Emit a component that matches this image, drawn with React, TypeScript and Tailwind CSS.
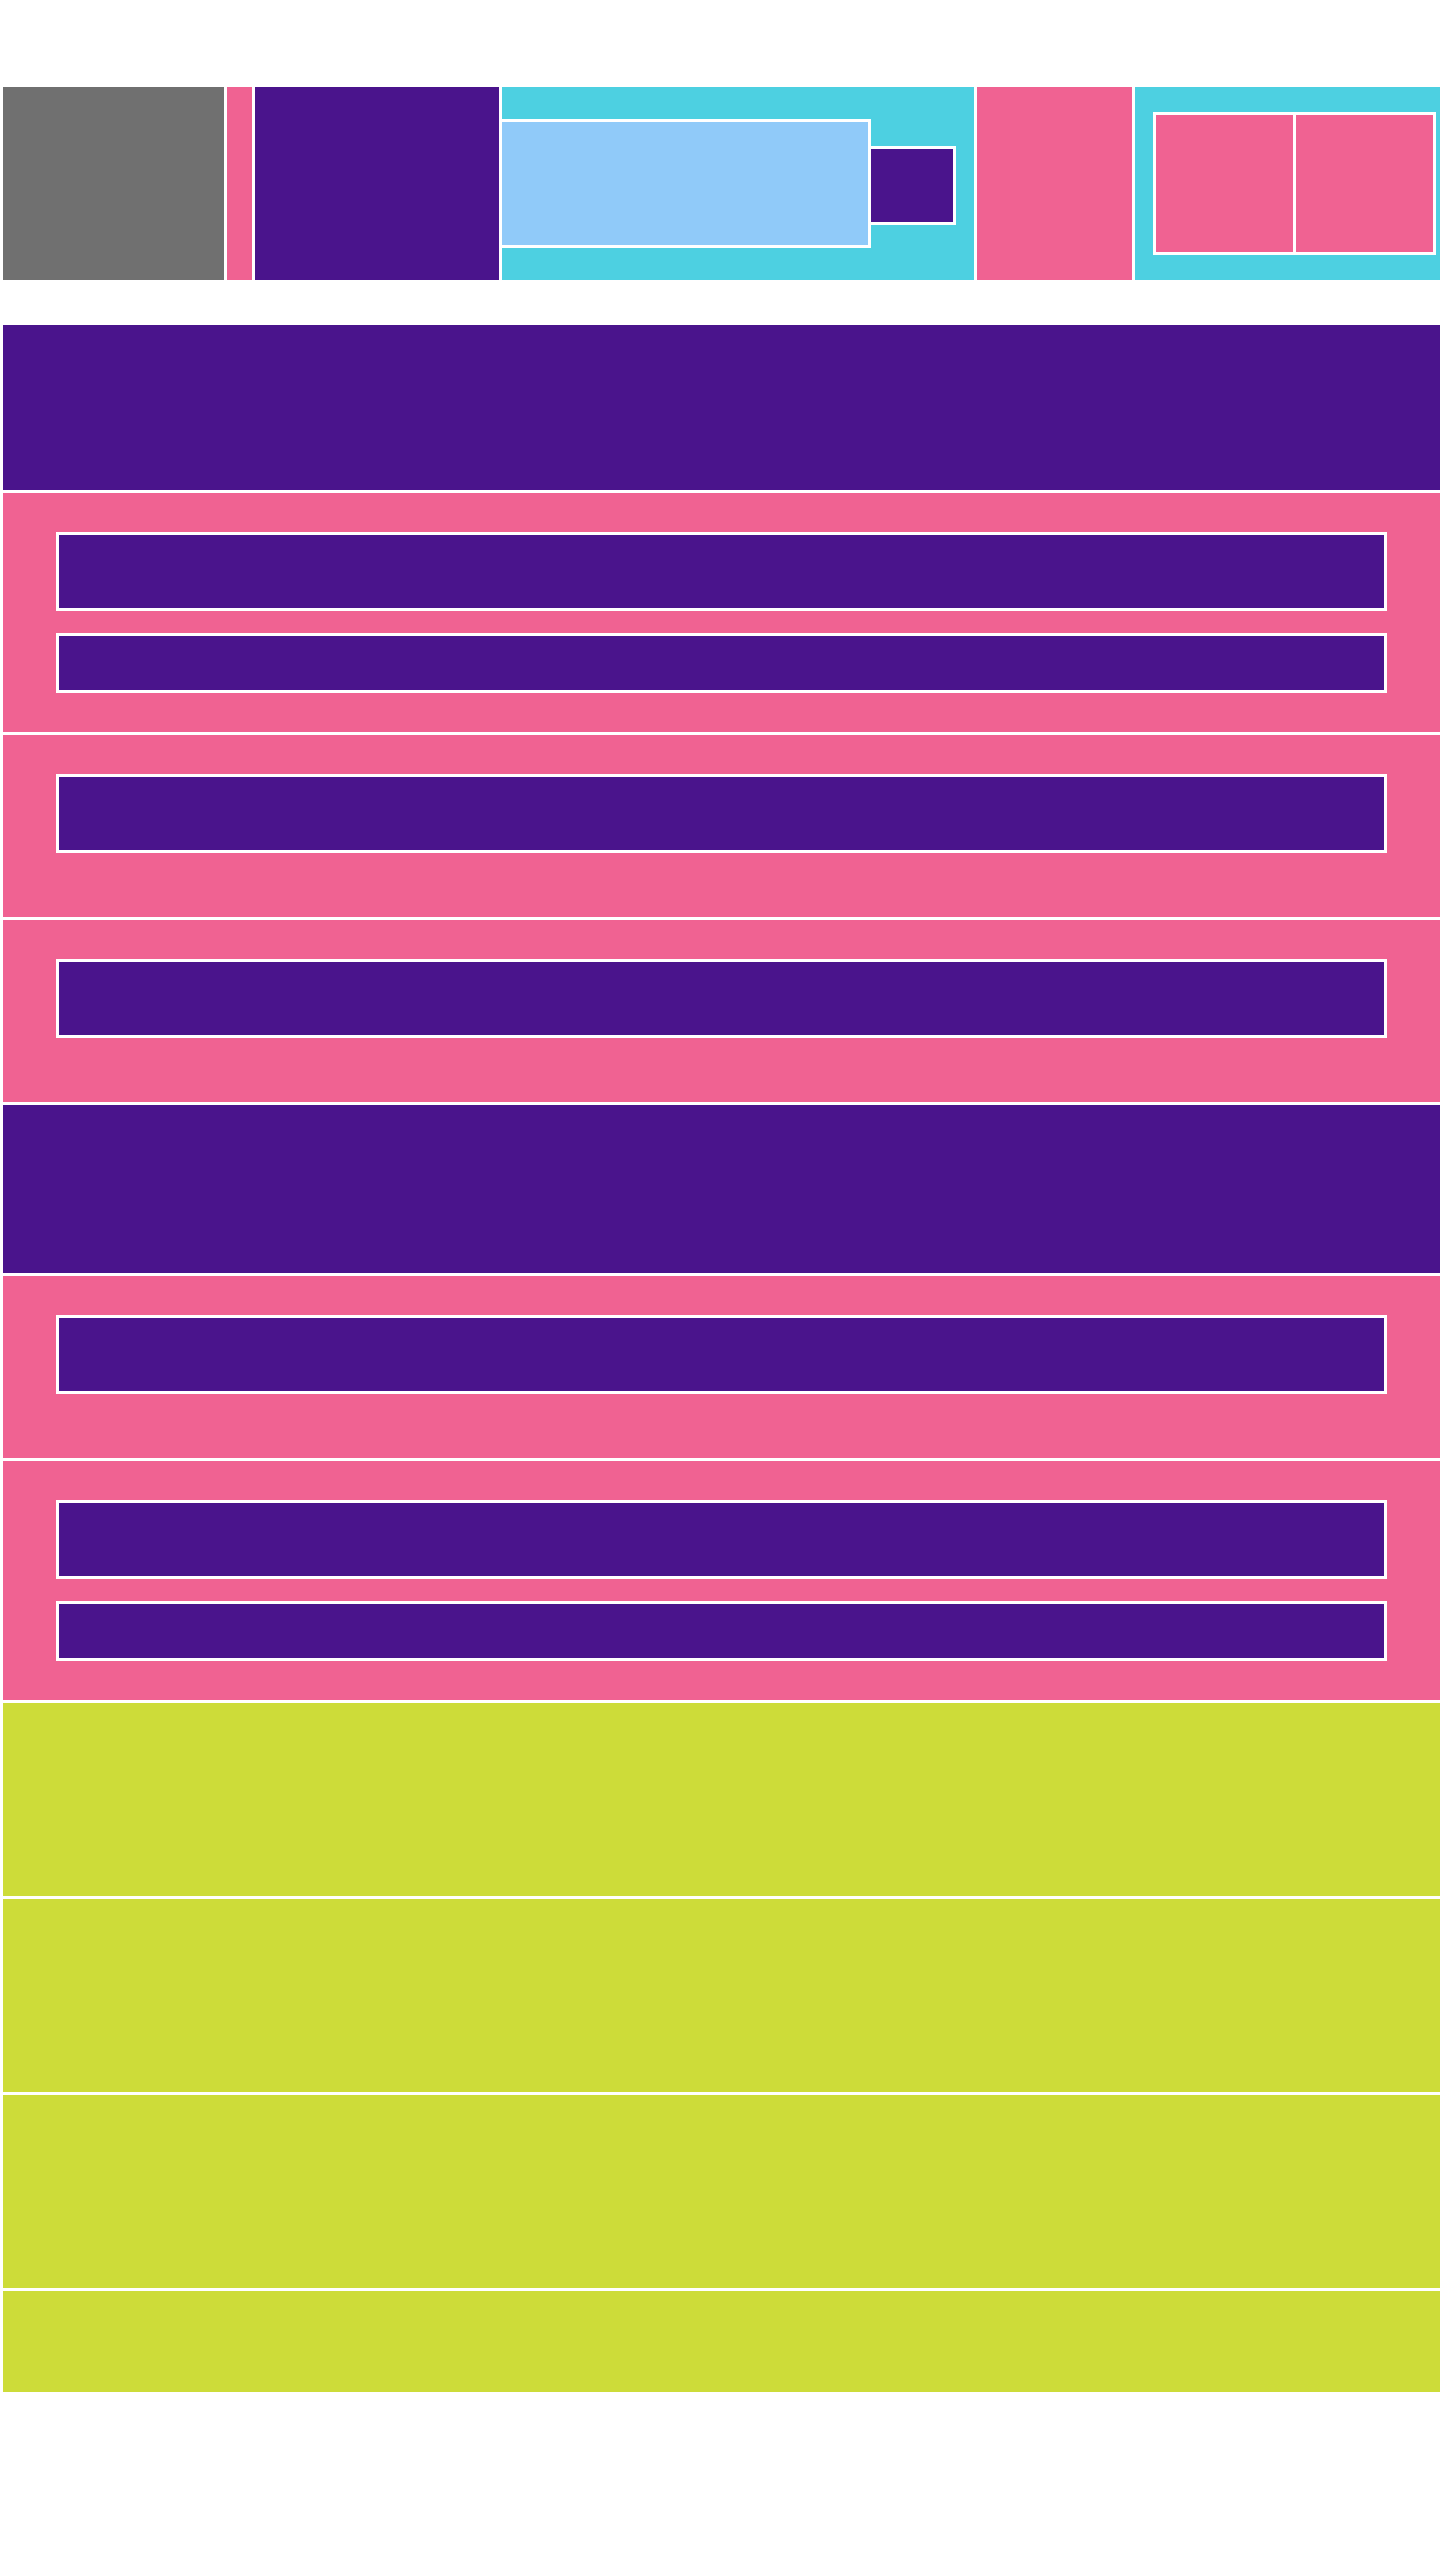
const pink = 'bg-[#f06292]';
const purple = 'bg-[#4a148c]';

function Slot({ h }: { h: string }) {
  return <div className={`${h} w-full border-[3px] border-white bg-[#4a148c]`} />;
}

function PinkBand({ tall, double }: { tall: string; double?: boolean }) {
  return (
    <section className={`${tall} ${pink} flex flex-col gap-[22px] px-[53px] pt-[39px]`}>
      <Slot h="h-[79px]" />
      {double && <Slot h="h-[60px]" />}
    </section>
  );
}

export default function App() {
  return (
    <div className="min-h-screen bg-white pl-[3px] pt-[87px] pb-[168px]">
      {/* top strip */}
      <header className="flex h-[193px] gap-[3px]">
        <div className="w-[221px] shrink-0 bg-[#707070]" />
        <div className={`w-[25px] shrink-0 ${pink}`} />
        <div className={`w-[244px] shrink-0 ${purple}`} />
        <div className="flex w-[472px] shrink-0 items-center bg-[#4dd0e1]">
          <div className="h-[129px] w-[369px] border-y-[3px] border-r-[3px] border-white bg-[#90caf9]" />
          <div className={`mt-[4px] h-[79px] w-[85px] border-y-[3px] border-r-[3px] border-white ${purple}`} />
        </div>
        <div className={`w-[155px] shrink-0 ${pink}`} />
        <div className="flex flex-1 items-center bg-[#4dd0e1] pl-[18px]">
          <div className="flex h-[143px] w-[283px] gap-[3px] border-[3px] border-white bg-white">
            <div className={`flex-1 ${pink}`} />
            <div className={`flex-1 ${pink}`} />
          </div>
        </div>
      </header>

      {/* stacked bands */}
      <main className="mt-[45px] flex flex-col gap-[3px]">
        <section className={`h-[165px] ${purple}`} />
        <PinkBand tall="h-[239px]" double />
        <PinkBand tall="h-[182px]" />
        <PinkBand tall="h-[182px]" />
        <section className={`h-[168px] ${purple}`} />
        <PinkBand tall="h-[182px]" />
        <PinkBand tall="h-[239px]" double />
        <section className="h-[193px] bg-[#cddc39]" />
        <section className="h-[193px] bg-[#cddc39]" />
        <section className="h-[193px] bg-[#cddc39]" />
        <section className="h-[101px] bg-[#cddc39]" />
      </main>
    </div>
  );
}
